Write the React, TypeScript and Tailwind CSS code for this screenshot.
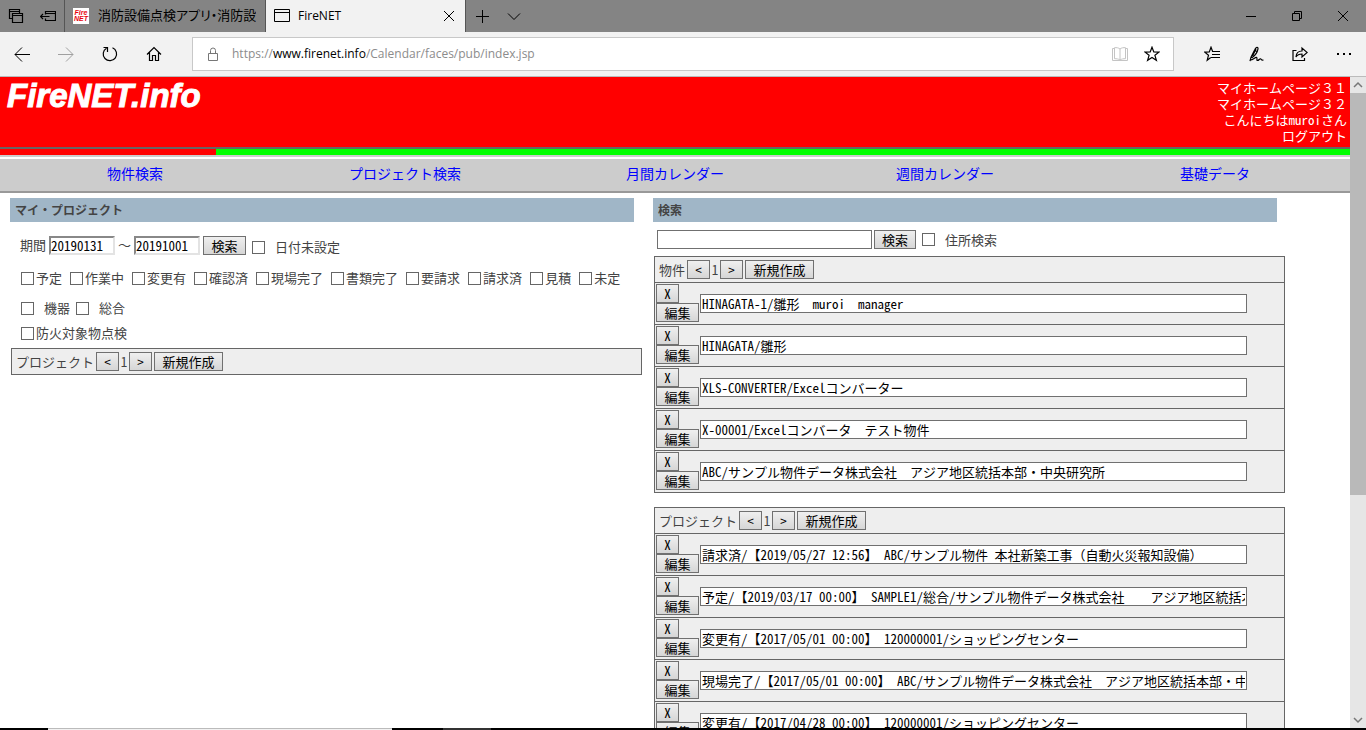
import clsx from 'clsx'
import React from 'react'

type IconProps = {
  size?: number
  className?: string
  children: React.ReactNode
}

function Icon({ size = 16, className, children }: IconProps) {
  return (
    <svg
      width={size}
      height={size}
      viewBox={`0 0 ${size} ${size}`}
      fill="none"
      stroke="currentColor"
      className={clsx('shrink-0', className)}
      aria-hidden="true"
    >
      {children}
    </svg>
  )
}

const statusFilters = [
  '予定',
  '作業中',
  '変更有',
  '確認済',
  '現場完了',
  '書類完了',
  '要請求',
  '請求済',
  '見積',
  '未定',
]

const navLinks = ['物件検索', 'プロジェクト検索', '月間カレンダー', '週間カレンダー', '基礎データ']

const userLinks = ['マイホームページ３１', 'マイホームページ３２']

const buildings = [
  'HINAGATA-1/雛形　muroi　manager',
  'HINAGATA/雛形',
  'XLS-CONVERTER/Excelコンバーター',
  'X-00001/Excelコンバータ　テスト物件',
  'ABC/サンプル物件データ株式会社　アジア地区統括本部・中央研究所',
]

const projects = [
  '請求済/【2019/05/27 12:56】 ABC/サンプル物件 本社新築工事（自動火災報知設備）',
  '予定/【2019/03/17 00:00】 SAMPLE1/総合/サンプル物件データ株式会社　　アジア地区統括本部',
  '変更有/【2017/05/01 00:00】 120000001/ショッピングセンター',
  '現場完了/【2017/05/01 00:00】 ABC/サンプル物件データ株式会社　アジア地区統括本部・中央研究所',
  '変更有/【2017/04/28 00:00】 120000001/ショッピングセンター',
]

function TabBar() {
  return (
    <div className="flex h-8 shrink-0 bg-[#848484] text-black">
      <button type="button" className="flex w-8 items-center justify-center" aria-label="表示中のタブ">
        <Icon>
          <path strokeWidth="1.200" d="M4.500 10.500h-3v-9h10v4M1.500 3.500h10M4.500 5.500h10v9h-10zM4.500 7.500h10" />
        </Icon>
      </button>
      <button type="button" className="flex w-8 items-center justify-center" aria-label="タブを保存">
        <Icon>
          <path strokeWidth="1.200" d="M5.500 6.500v-3h10v9h-10v-2M5.500 5.500h10M.8 8.500h8.700M3 6l-2.500 2.500L3 11" />
        </Icon>
      </button>
      <div className="flex w-[202px] items-center border-x border-[#555] pl-2">
        <span className="flex h-4 w-4 shrink-0 flex-col items-center justify-center bg-white font-['Liberation_Sans',sans-serif] text-[7px] leading-[6px] font-bold text-red-600 italic">
          <span>Fire</span>
          <span>NET</span>
        </span>
        <span className="ml-[9px] w-[158px] overflow-hidden text-[13px] whitespace-nowrap [font-feature-settings:'palt']">
          消防設備点検アプリ・消防設備
        </span>
      </div>
      <div className="flex w-[200px] items-center border-r border-[#555] bg-[#f2f2f2] pl-2">
        <Icon>
          <path d="M.5 1.500h15v12H.5zM.5 4.500h15" />
        </Icon>
        <span className="ml-2 flex-1 text-xs">FireNET</span>
        <button type="button" className="flex w-8 items-center justify-center" aria-label="タブを閉じる">
          <Icon size={12}>
            <path d="M1 1l10 10M11 1L1 11" />
          </Icon>
        </button>
      </div>
      <button type="button" className="flex w-8 items-center justify-center" aria-label="新しいタブ">
        <Icon>
          <path d="M8.500 2v13M2 8.500h13" />
        </Icon>
      </button>
      <button type="button" className="flex w-8 items-center justify-center" aria-label="タブプレビュー">
        <Icon>
          <path d="M2 5.500l6 6 6-6" />
        </Icon>
      </button>
      <div className="ml-auto flex">
        <button type="button" className="flex w-[46px] items-center justify-center" aria-label="最小化">
          <Icon>
            <path d="M3 8.500h10" />
          </Icon>
        </button>
        <button type="button" className="flex w-[46px] items-center justify-center" aria-label="元に戻す">
          <Icon>
            <path d="M3.500 5.500h7v7h-7zM5.500 5v-1.500h7v7H11" />
          </Icon>
        </button>
        <button type="button" className="flex w-[46px] items-center justify-center" aria-label="閉じる">
          <Icon size={12}>
            <path d="M1 1l10 10M11 1L1 11" />
          </Icon>
        </button>
      </div>
    </div>
  )
}

function ToolButton({ label, className, children }: { label: string; className?: string; children: React.ReactNode }) {
  return (
    <button type="button" aria-label={label} className={clsx('flex w-11 items-center justify-center', className)}>
      {children}
    </button>
  )
}

function AddressBar() {
  return (
    <div className="flex h-[45px] shrink-0 border-b border-[#bbb] bg-[#f2f2f2] pt-[5px] pb-[5px] text-black">
      <ToolButton label="戻る">
        <Icon>
          <path d="M1 8.500h15M8 1.500l-7 7 7 7" />
        </Icon>
      </ToolButton>
      <ToolButton label="進む" className="text-[#a0a0a0]">
        <Icon>
          <path d="M0 8.500h15M8 1.500l7 7-7 7" />
        </Icon>
      </ToolButton>
      <ToolButton label="更新">
        <Icon>
          <path strokeWidth="1.200" d="M10.500 1.800A6.700 6.700 0 1 1 4.500 2.200M1.500 1.500h4V6" />
        </Icon>
      </ToolButton>
      <ToolButton label="ホーム">
        <Icon>
          <path strokeWidth="1.200" d="M1 8.500l7-7 7 7M3.500 6.500v8h3v-5h3v5h3v-8" />
        </Icon>
      </ToolButton>
      <div className="ml-4 flex flex-1 items-center border border-[#c8c8c8] bg-white pl-3">
        <Icon className="text-[#777]">
          <path d="M3.500 7.500h9v7h-9zM5.500 7.500V4.500a2.500 2.500 0 0 1 5 0v3" />
        </Icon>
        <span className="ml-[11px] flex-1 text-xs text-[#8c8c8c]">
          https://<span className="text-black">www.firenet.info</span>/Calendar/faces/pub/index.jsp
        </span>
        <button type="button" className="flex w-8 justify-center text-[#c4c4c4]" aria-label="読み取りビュー">
          <Icon>
            <path d="M8 3C6.500 1.700 4.500 1.500 2.500 1.700v11c2 0 4 .2 5.500 1.300 1.500-1.100 3.500-1.300 5.500-1.300v-11C11.500 1.500 9.500 1.700 8 3zv11M2.500 2.500h-2v12h15v-12h-2" />
          </Icon>
        </button>
        <button type="button" className="mr-[5px] flex w-8 justify-center" aria-label="お気に入りに追加">
          <Icon>
            <path strokeWidth="1.200" d="M8 1.200l1.800 4.700 5.200.2-4.100 3.200 1.500 5L8 11.400l-4.400 2.900 1.500-5L1 6.100l5.200-.2z" />
          </Icon>
        </button>
      </div>
      <ToolButton label="ハブ" className="ml-4">
        <Icon>
          <path strokeWidth="1.200" d="M9.500 5.500H8.600L7 1.200 5.300 5.900 .8 6.100l3.700 3.100-1.300 5 3.600-2.600M8.500 5.500H16M8 8.500h8M7 11.500h9" />
        </Icon>
      </ToolButton>
      <ToolButton label="ノートの追加">
        <Icon>
          <path
            strokeWidth="1.200"
            d="M2 15.200L3 11.200 7 3.200C8 1 10.200.5 10 2.800 9.500 5.500 7 9.500 4.200 11.500L3 11.500M6.500 4.500l2.500 1M8 3L4.500 10M2.500 14c2.500 0 4.500-3 6-2.700 1.200.4-.3 3.200 1 3.200 1.500 0 2-2 3-1.700.9.300.6 1.700 3 1.200"
          />
        </Icon>
      </ToolButton>
      <ToolButton label="共有">
        <Icon>
          <path strokeWidth="1.200" d="M4.500 4.500H1v10h11.500V12M4 11c.2-4 2.200-6 6-6V2l5.200 4.500L10 11V8c-3 0-4.500.5-6 3z" />
        </Icon>
      </ToolButton>
      <ToolButton label="設定など">
        <Icon>
          <path strokeWidth="2" d="M1 8h2M7 8h2M13 8h2" />
        </Icon>
      </ToolButton>
    </div>
  )
}

function PushButton({ className, children }: { className?: string; children: React.ReactNode }) {
  return (
    <button
      type="button"
      className={clsx(
        'flex h-[19px] shrink-0 items-center justify-center border border-[#707070] bg-linear-to-b from-[#efefef] to-[#d6d6d6] leading-4 text-black',
        className,
      )}
    >
      {children}
    </button>
  )
}

function Check({ label, wide = false }: { label: string; wide?: boolean }) {
  return (
    <label className={clsx('flex items-center', wide ? 'gap-[10px]' : 'gap-[2px]')}>
      <input type="checkbox" className="h-[13px] w-[13px] shrink-0 appearance-none border border-[#666] bg-white" />
      <span>{label}</span>
    </label>
  )
}

function PanelTitle({ children }: { children: React.ReactNode }) {
  return (
    <h2 className="mr-[19px] h-6 bg-[#a0b6c7] pl-[5px] text-xs leading-6 font-bold text-[#444]">{children}</h2>
  )
}

function ListTable({ title, items = [] }: { title: string; items?: string[] }) {
  return (
    <table className="w-full border-collapse border border-[#666] bg-[#eee]">
      <thead>
        <tr className="border border-[#666]">
          <th className="h-[26px] p-0 font-normal">
            <div className="flex items-center pl-1">
              <span>{title}</span>
              <PushButton className="ml-[2px] w-[23px]">&lt;</PushButton>
              <span className="w-[10px] text-center">1</span>
              <PushButton className="w-[23px]">&gt;</PushButton>
              <PushButton className="ml-[2px] w-[69px]">新規作成</PushButton>
            </div>
          </th>
        </tr>
      </thead>
      <tbody>
        {items.map((item) => (
          <tr key={item} className="border border-[#666]">
            <td className="p-px pb-[2px]">
              <div className="flex items-center pr-9">
                <div className="w-11">
                  <PushButton className="w-[23px]">X</PushButton>
                  <PushButton className="w-[43px]">編集</PushButton>
                </div>
                <input
                  type="text"
                  readOnly
                  aria-label={title}
                  defaultValue={item}
                  className="h-[19px] min-w-0 flex-1 border border-[#707070] bg-white px-px text-black"
                />
              </div>
            </td>
          </tr>
        ))}
      </tbody>
    </table>
  )
}

function DateInput({ label, value }: { label: string; value: string }) {
  return (
    <input
      type="text"
      aria-label={label}
      defaultValue={value}
      className="h-[19px] w-[66px] border-2 border-t-[#888] border-r-[#e3e3e3] border-b-[#e3e3e3] border-l-[#888] bg-white text-black"
    />
  )
}

function MyProjects() {
  return (
    <section>
      <PanelTitle>マイ・プロジェクト</PanelTitle>
      <div className="flex h-[33px] items-end pl-[10px]">
        <span className="w-[29px] pb-[2px]">期間</span>
        <DateInput label="開始日" value="20190131" />
        <span className="w-[19px] pb-[2px] text-center">～</span>
        <DateInput label="終了日" value="20191001" />
        <PushButton className="mr-[6px] ml-[3px] w-[43px]">検索</PushButton>
        <Check label="日付未設定" wide />
      </div>
      <div className="mt-[13px] flex h-5 gap-2 pl-[11px] whitespace-nowrap">
        {statusFilters.map((status) => (
          <Check key={status} label={status} />
        ))}
      </div>
      <div className="mt-[10px] flex h-5 gap-[6px] pl-[11px]">
        <Check label="機器" wide />
        <Check label="総合" wide />
      </div>
      <div className="mt-[5px] flex h-5 pl-[11px]">
        <Check label="防火対象物点検" />
      </div>
      <div className="mt-[5px] mr-[11px] ml-px">
        <ListTable title="プロジェクト" />
      </div>
    </section>
  )
}

function SearchPanel() {
  return (
    <section>
      <PanelTitle>検索</PanelTitle>
      <div className="mt-2 flex items-center pl-1">
        <input
          type="text"
          aria-label="検索キーワード"
          className="h-[19px] w-[215px] border border-[#707070] bg-white px-px"
        />
        <PushButton className="mr-[6px] ml-[2px] w-[42px]">検索</PushButton>
        <Check label="住所検索" wide />
      </div>
      <div className="mt-[7px] mr-[11px] ml-px space-y-[14px]">
        <ListTable title="物件" items={buildings} />
        <ListTable title="プロジェクト" items={projects} />
      </div>
    </section>
  )
}

function ScrollBar() {
  return (
    <div className="flex w-4 shrink-0 flex-col bg-[#e6e6e6] text-[#777]" aria-hidden="true">
      <Icon>
        <path strokeWidth="1.500" d="M4 10l4-4 4 4" />
      </Icon>
      <div className="min-h-0 flex-1">
        <div className="h-[65%] bg-[#b9b9b9]" />
      </div>
      <Icon>
        <path strokeWidth="1.500" d="M4 6l4 4 4-4" />
      </Icon>
    </div>
  )
}

export default function App() {
  return (
    <div className="flex h-screen flex-col overflow-hidden bg-white font-['Open_Sans','Noto_Sans_CJK_JP',sans-serif]">
      <TabBar />
      <AddressBar />
      <div className="flex min-h-0 flex-1">
        <main className="min-w-0 flex-1 overflow-hidden font-['Noto_Sans_Mono_CJK_JP','Noto_Sans_CJK_JP',sans-serif] text-[13px] leading-4 text-[#444]">
          <header className="flex h-[70px] justify-between bg-[#f00] text-white">
            <h1 className="pl-[7px] font-['Liberation_Sans',sans-serif] text-[33px] leading-[38px] font-bold italic [-webkit-text-stroke:1px_white]">
              FireNET.info
            </h1>
            <div className="flex flex-col items-end pt-[3px] pr-[3px]">
              {userLinks.map((link) => (
                <a key={link} href="#">
                  {link}
                </a>
              ))}
              <span>こんにちはmuroiさん</span>
              <a href="#">ログアウト</a>
            </div>
          </header>
          <div className="flex h-[10px] border-t-2 border-b-2 border-t-[#666] border-b-[#ccc]">
            <div className="w-[16%] bg-[#f00]" />
            <div className="flex-1 bg-[#0f0]" />
          </div>
          <nav className="mt-[2px] grid h-[34px] grid-cols-5 border-b-2 border-[#999] bg-[#ccc] text-center text-sm leading-7 text-[#00f]">
            {navLinks.map((link) => (
              <a key={link} href="#">
                {link}
              </a>
            ))}
          </nav>
          <div className="mt-[5px] grid grid-cols-2 pr-[54px] pl-[10px]">
            <MyProjects />
            <SearchPanel />
          </div>
        </main>
        <ScrollBar />
      </div>
      <div className="flex h-[2px] shrink-0 bg-black">
        <div className="ml-12 w-[344px] border-t border-[#bbb] bg-[#f2f2f2]" />
        <div className="ml-[51px] w-12 bg-[#333]" />
      </div>
    </div>
  )
}
